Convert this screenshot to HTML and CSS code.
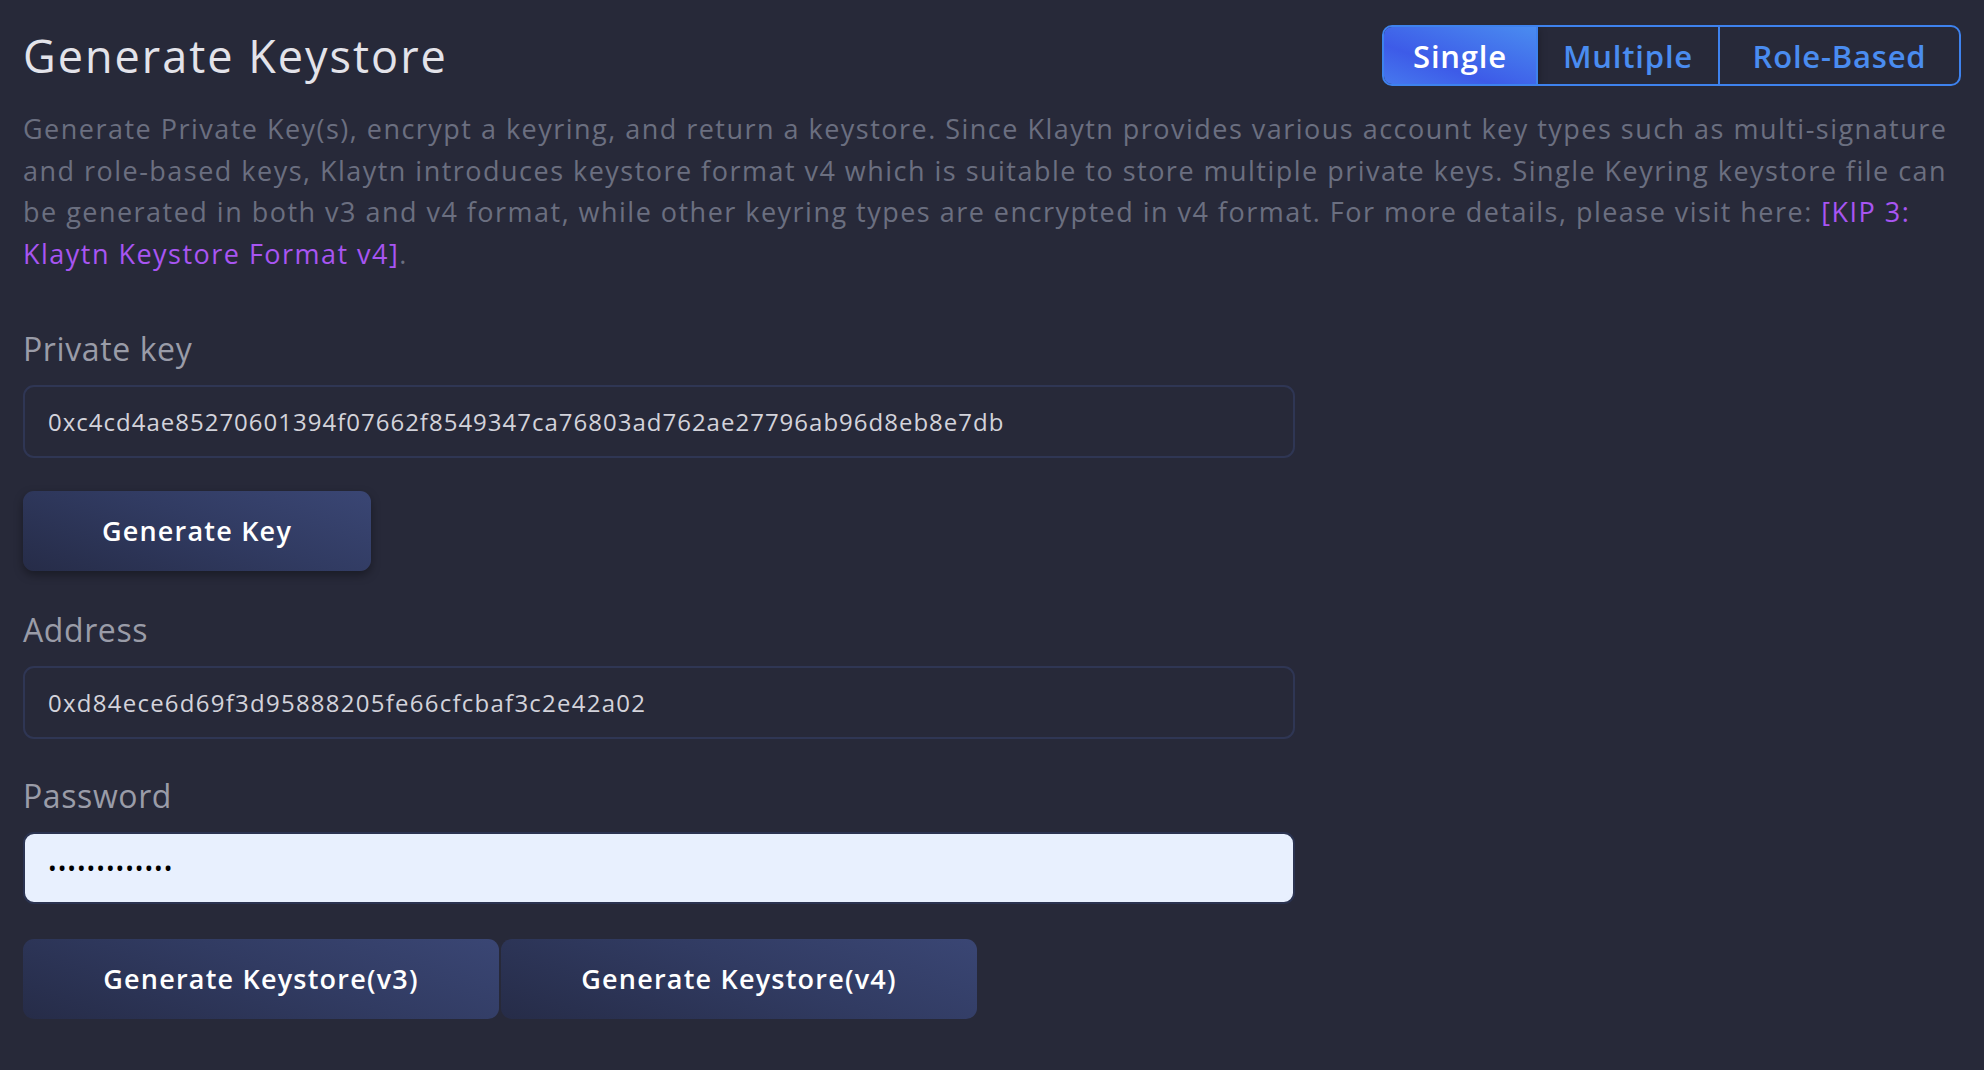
FILE: index.html
```html
<!DOCTYPE html>
<html lang="en">
<head>
<meta charset="utf-8">
<title>Generate Keystore</title>
<link rel="stylesheet" href="styles.css">
</head>
<body>
<main class="page">
  <header class="head">
    <h1 class="title">Generate Keystore</h1>
    <div class="toggle">
      <button class="seg seg-active">Single</button>
      <button class="seg">Multiple</button>
      <button class="seg">Role-Based</button>
    </div>
  </header>
  <p class="desc">Generate Private Key(s), encrypt a keyring, and return a keystore. Since Klaytn provides various account key types such as multi-signature<br>and role-based keys, Klaytn introduces keystore format v4 which is suitable to store multiple private keys. Single Keyring keystore file can<br>be generated in both v3 and v4 format, while other keyring types are encrypted in v4 format. For more details, please visit here: <a class="link" href="#">[KIP 3:<br>Klaytn Keystore Format v4]</a>.</p>

  <section class="form">
    <label class="label">Private key</label>
    <input class="field" type="text" value="0xc4cd4ae85270601394f07662f8549347ca76803ad762ae27796ab96d8eb8e7db">
    <div class="actions">
      <button class="btn btn-key">Generate Key</button>
    </div>

    <label class="label">Address</label>
    <input class="field field-addr" type="text" value="0xd84ece6d69f3d95888205fe66cfcbaf3c2e42a02">

    <label class="label">Password</label>
    <input class="field field-pw" type="password" value="aaaaaaaaaaaaa">
    <div class="actions actions-pair">
      <button class="btn btn-ks">Generate Keystore(v3)</button>
      <button class="btn btn-ks">Generate Keystore(v4)</button>
    </div>
  </section>
</main>
</body>
</html>
```

FILE: styles.css
```css
* { box-sizing: border-box; }
html, body {
  margin: 0;
  background: #272939;
}
body {
  font-family: "Open Sans", "Liberation Sans", sans-serif;
  height: 1070px;
  overflow: hidden;
}
.page {
  padding: 25px 23px 0 23px;
}
.head {
  display: flex;
  align-items: center;
  justify-content: space-between;
  height: 61px;
}
.title {
  margin: 0;
  font-size: 45px;
  font-weight: 400;
  letter-spacing: 2px;
  color: #e3e3ea;
  line-height: 1;
}
.toggle {
  display: flex;
  height: 61px;
  border: 2px solid #3e82ee;
  border-radius: 10px;
  overflow: hidden;
}
.seg {
  font-family: inherit;
  font-size: 31px;
  font-weight: 600;
  letter-spacing: 0.8px;
  color: #4a8cf0;
  background: transparent;
  border: 0;
  border-left: 2px solid #3e82ee;
  padding: 0;
  height: 100%;
}
.seg:first-child { border-left: 0; }
.seg:nth-child(1) { width: 152px; }
.seg:nth-child(2) { width: 182px; }
.seg:nth-child(3) { width: 241px; }
.seg-active {
  color: #ffffff;
  background: linear-gradient(200deg, #4a8cf0 0%, #3d5be8 65%, #4678ee 100%);
  box-shadow: 2px 2px 8px rgba(0,0,0,0.35);
}
.desc {
  margin: 22px 0 0 0;
  font-size: 27px;
  letter-spacing: 1.48px;
  line-height: 41.7px;
  color: #6b6f80;
  white-space: nowrap;
}
.link {
  color: #a855f2;
  text-decoration: none;
}
.form {
  display: flex;
  flex-direction: column;
  align-items: flex-start;
  margin-top: 50px;
}
.label {
  font-size: 32px;
  letter-spacing: 0.6px;
  line-height: 48px;
  color: #9a9ca8;
  margin-bottom: 12px;
}
.field {
  width: 1272px;
  height: 73px;
  border: 2px solid #2f3654;
  border-radius: 11px;
  background: transparent;
  padding: 0 23px;
  font-family: inherit;
  font-size: 24px;
  letter-spacing: 1px;
  color: #d3d3db;
  outline: none;
  margin-bottom: 33px;
}
.field-addr { letter-spacing: 1.25px; }
.field-pw {
  height: 72px;
  background: #e8f0fe;
  color: #000;
  border-color: #2b3350;
  font-size: 23px;
  letter-spacing: 1px;
  margin-bottom: 35px;
}
.actions {
  display: flex;
  gap: 2px;
  margin-bottom: 35px;
}
.btn {
  font-family: inherit;
  font-size: 27px;
  font-weight: 600;
  letter-spacing: 1.2px;
  color: #ffffff;
  height: 80px;
  border: 0;
  border-radius: 11px;
  background: linear-gradient(20deg, #262c48 0%, #313b62 55%, #3a4674 100%);
  box-shadow: 0 4px 10px rgba(0,0,0,0.35);
  padding: 0;
}
.btn-key { width: 348px; }
.btn-ks { width: 476px; box-shadow: none; }
```
